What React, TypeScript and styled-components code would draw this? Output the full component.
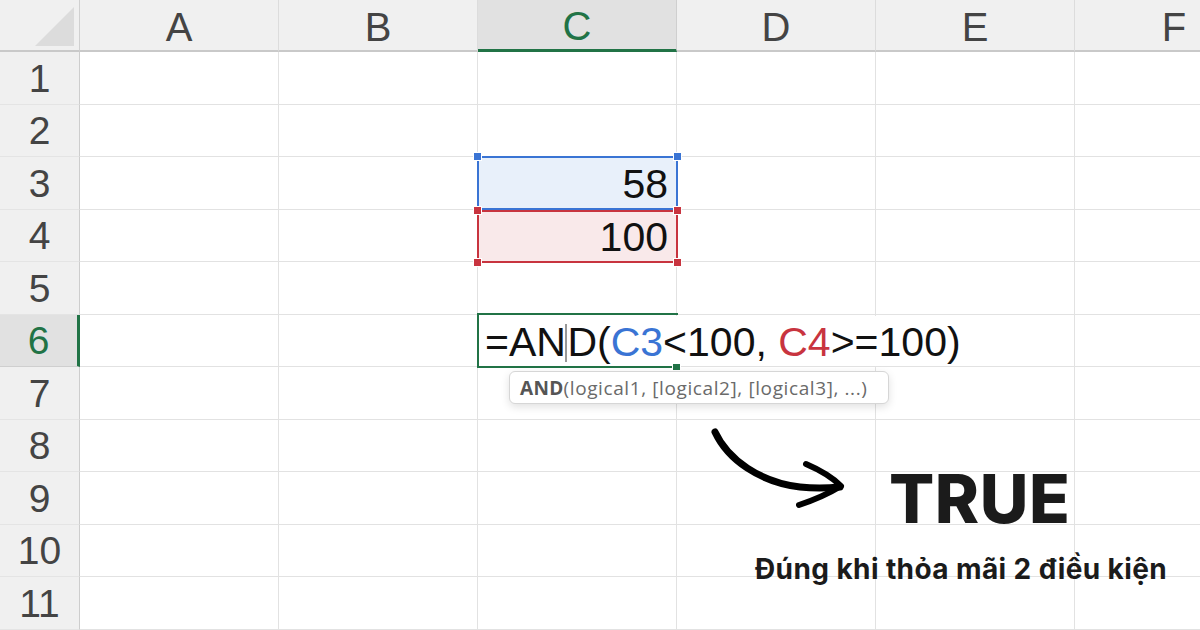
import React from "react";
import styled, { createGlobalStyle, css } from "styled-components";

const GlobalStyle = createGlobalStyle`
  html, body {
    margin: 0;
    padding: 0;
    background: #ffffff;
  }
  body {
    font-family: "Liberation Sans", Arial, sans-serif;
  }
`;

const COLS = ["A", "B", "C", "D", "E", "F"];
const ROWS = [1, 2, 3, 4, 5, 6, 7, 8, 9, 10, 11];
const GREEN = "#217346";
const BLUE = "#3a74d4";
const RED = "#c8343f";

const colX = (i: number) => 80 + i * 199;
const rowY = (n: number) => 52 + (n - 1) * 52.5;

const Canvas = styled.div`
  position: relative;
  width: 1200px;
  height: 630px;
  overflow: hidden;
  background: #fff;
`;

const Sheet = styled.div`
  display: grid;
  grid-template-columns: 80px repeat(6, 199px);
  grid-template-rows: 52px repeat(12, 52.5px);
  width: max-content;
`;

const Corner = styled.div`
  position: relative;
  background: #f0f0f0;
  border-right: 1px solid #d0d0d0;
  border-bottom: 2px solid #c9c9c9;
  &::after {
    content: "";
    position: absolute;
    right: 5px;
    bottom: 4px;
    width: 0;
    height: 0;
    border-left: 39px solid transparent;
    border-bottom: 39px solid #dcdcdc;
  }
`;

const ColHeader = styled.div<{ $active?: boolean }>`
  display: flex;
  align-items: center;
  justify-content: center;
  background: #f0f0f0;
  border-right: 1px solid #dcdcdc;
  border-bottom: 2px solid #c9c9c9;
  font-size: 40px;
  color: #444;
  padding-top: 4px;
  box-sizing: border-box;
  ${({ $active }) =>
    $active &&
    css`
      background: #e1e1e1;
      color: ${GREEN};
      border-bottom: 3px solid ${GREEN};
      border-right-color: #cfcfcf;
    `}
`;

const RowHeader = styled.div<{ $active?: boolean }>`
  display: flex;
  align-items: center;
  justify-content: center;
  background: #f0f0f0;
  border-right: 1px solid #cdcdcd;
  border-bottom: 1px solid #e4e4e4;
  font-size: 39px;
  color: #444;
  box-sizing: border-box;
  padding-top: 2px;
  ${({ $active }) =>
    $active &&
    css`
      background: #e1e1e1;
      color: ${GREEN};
      border-right: 3px solid ${GREEN};
      border-bottom-color: #cfcfcf;
    `}
`;

const Cell = styled.div`
  border-right: 1px solid #e2e2e2;
  border-bottom: 1px solid #e2e2e2;
  box-sizing: border-box;
`;

const Range = styled.div<{ $color: string; $fill: string }>`
  position: absolute;
  box-sizing: border-box;
  border: 2px solid ${({ $color }) => $color};
  background: ${({ $fill }) => $fill};
  display: flex;
  align-items: center;
  justify-content: flex-end;
  padding: 3px 8px 0 0;
  font-size: 41px;
  color: #111;
`;

const Handle = styled.span<{ $color: string; $x: "l" | "r"; $y: "t" | "b" }>`
  position: absolute;
  width: 7px;
  height: 7px;
  background: ${({ $color }) => $color};
  outline: 1px solid #fff;
  ${({ $x }) => ($x === "l" ? "left: -5px;" : "right: -5px;")}
  ${({ $y }) => ($y === "t" ? "top: -5px;" : "bottom: -5px;")}
`;

const Editor = styled.div`
  position: absolute;
  left: 479px;
  top: 316px;
  width: 510px;
  height: 50px;
  background: #fff;
  display: flex;
  align-items: center;
  padding: 3px 0 0 6px;
  box-sizing: border-box;
  font-size: 41px;
  color: #111;
  white-space: pre;
`;

const Ref = styled.span<{ $color: string }>`
  color: ${({ $color }) => $color};
`;

const Caret = styled.span`
  display: inline-block;
  width: 1.5px;
  height: 38px;
  background: #333;
  transform: translateX(-0.5px);
`;

const ActiveFrame = styled.div`
  position: absolute;
  left: 477px;
  top: 313px;
  width: 201px;
  height: 55px;
  box-sizing: border-box;
  border: 2px solid ${GREEN};
  border-right: none;
  pointer-events: none;
  &::after {
    content: "";
    position: absolute;
    right: -2px;
    bottom: -4px;
    width: 7px;
    height: 6px;
    background: ${GREEN};
    outline: 1px solid #fff;
  }
`;

const Tooltip = styled.div`
  position: absolute;
  left: 509px;
  top: 371px;
  width: 380px;
  height: 33px;
  box-sizing: border-box;
  background: #fff;
  border: 1px solid #d6d6d6;
  border-radius: 6px;
  box-shadow: 0 3px 8px rgba(0, 0, 0, 0.12);
  display: flex;
  align-items: center;
  padding-left: 10px;
  font-family: "Open Sans", "Liberation Sans", sans-serif;
  font-size: 19px;
  letter-spacing: 0.6px;
  color: #6a6a6a;
  white-space: pre;
  b {
    color: #555;
    font-weight: 700;
    letter-spacing: 0.3px;
  }
`;

const Arrow = styled.svg`
  position: absolute;
  left: 700px;
  top: 420px;
`;

const Result = styled.div`
  position: absolute;
  left: 889px;
  top: 456px;
  font-family: Inter, "Noto Sans", sans-serif;
  font-weight: 800;
  font-size: 67px;
  line-height: 86px;
  color: #1b1b1b;
  letter-spacing: 0.5px;
`;

const Caption = styled.div`
  position: absolute;
  left: 755px;
  top: 551px;
  font-family: Inter, "Noto Sans", sans-serif;
  font-weight: 700;
  font-size: 28px;
  line-height: 36px;
  letter-spacing: 0.4px;
  color: #1b1b1b;
  white-space: nowrap;
`;

export default function App() {
  return (
    <Canvas>
      <GlobalStyle />
      <Sheet>
        <Corner />
        {COLS.map((c) => (
          <ColHeader key={c} $active={c === "C"}>
            {c}
          </ColHeader>
        ))}
        {[...ROWS, 0].map((r) => (
          <React.Fragment key={r}>
            <RowHeader $active={r === 6}>{r || ""}</RowHeader>
            {COLS.map((c) => (
              <Cell key={c} />
            ))}
          </React.Fragment>
        ))}
      </Sheet>

      <Range
        $color={BLUE}
        $fill="#e8f0fa"
        style={{ left: colX(2) - 1, top: rowY(3) - 1, width: 201, height: 54 }}
      >
        58
        <Handle $color={BLUE} $x="l" $y="t" />
        <Handle $color={BLUE} $x="r" $y="t" />
      </Range>
      <Range
        $color={RED}
        $fill="#f9e9ea"
        style={{ left: colX(2) - 1, top: rowY(4), width: 201, height: 53 }}
      >
        100
        <Handle $color={RED} $x="l" $y="t" />
        <Handle $color={RED} $x="r" $y="t" />
        <Handle $color={RED} $x="l" $y="b" />
        <Handle $color={RED} $x="r" $y="b" />
      </Range>

      <Editor>
        =AN
        <Caret />
        D(<Ref $color={BLUE}>C3</Ref>&lt;100, <Ref $color={RED}>C4</Ref>&gt;=100)
      </Editor>
      <ActiveFrame />

      <Tooltip>
        <b>AND</b>(logical1, [logical2], [logical3], ...)
      </Tooltip>

      <Arrow width="160" height="100" viewBox="0 0 160 100">
        <path
          d="M15 12 C 28 40, 60 62, 100 67 C 118 69, 130 68, 140 67"
          fill="none"
          stroke="#000"
          strokeWidth="7"
          strokeLinecap="round"
        />
        <path
          d="M106 44 C 120 50, 132 57, 141 66 C 128 74, 114 80, 99 85"
          fill="none"
          stroke="#000"
          strokeWidth="6"
          strokeLinecap="round"
          strokeLinejoin="round"
        />
      </Arrow>

      <Result>TRUE</Result>
      <Caption>Đúng khi thỏa mãi 2 điều kiện</Caption>
    </Canvas>
  );
}
